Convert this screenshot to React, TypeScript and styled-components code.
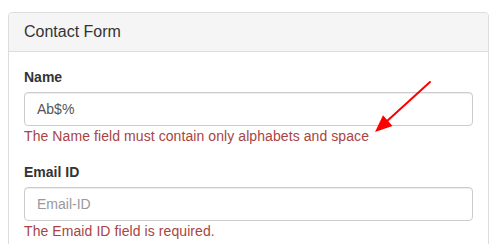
import React from "react";
import styled, { createGlobalStyle } from "styled-components";

const Global = createGlobalStyle`
  html, body { margin: 0; padding: 0; background: #fff; }
  body {
    font-family: "Liberation Sans", Arial, Helvetica, sans-serif;
    font-size: 14px;
    line-height: 20px;
    color: #333;
  }
  * { box-sizing: border-box; }
`;

const Page = styled.div`
  position: relative;
  padding: 12px 8px 0 8px;
  width: 497px;
  height: 244px;
  overflow: hidden;
`;

const Panel = styled.div`
  background: #fff;
  border: 1px solid #ddd;
  border-radius: 4px;
  box-shadow: 0 1px 1px rgba(0, 0, 0, 0.05);
`;

const PanelHeading = styled.div`
  background: #f5f5f5;
  border-bottom: 1px solid #ddd;
  border-top-left-radius: 3px;
  border-top-right-radius: 3px;
  padding: 10px 15px;
`;

const PanelTitle = styled.h3`
  margin: 0;
  font-size: 16px;
  line-height: 1.1;
  font-weight: 400;
  color: #333;
`;

const PanelBody = styled.div`
  padding: 15px;
`;

const FormGroup = styled.div`
  display: flex;
  flex-direction: column;
  margin-bottom: 16px;
`;

const Label = styled.label`
  font-weight: 700;
  font-size: 14px;
  line-height: 20px;
  margin-bottom: 5px;
  color: #333;
`;

const Input = styled.input`
  display: block;
  width: 100%;
  height: 34px;
  padding: 6px 12px;
  font-family: inherit;
  font-size: 14px;
  line-height: 20px;
  color: #555;
  background: #fff;
  border: 1px solid #ccc;
  border-radius: 4px;
  box-shadow: inset 0 1px 1px rgba(0, 0, 0, 0.075);
  outline: none;
  &::placeholder { color: #999; opacity: 1; }
`;

const HelpBlock = styled.span`
  display: block;
  margin-top: 0;
  font-size: 14px;
  line-height: 20px;
  letter-spacing: 0.08px;
  color: #a94442;
`;

const Arrow = styled.svg`
  position: absolute;
  left: 0;
  top: 0;
  pointer-events: none;
`;

export default function App() {
  return (
    <>
      <Global />
      <Page>
        <Panel>
          <PanelHeading>
            <PanelTitle>Contact Form</PanelTitle>
          </PanelHeading>
          <PanelBody>
            <FormGroup>
              <Label>Name</Label>
              <Input defaultValue="Ab$%" />
              <HelpBlock>The Name field must contain only alphabets and space</HelpBlock>
            </FormGroup>
            <FormGroup>
              <Label>Email ID</Label>
              <Input placeholder="Email-ID" />
              <HelpBlock>The Emaid ID field is required.</HelpBlock>
            </FormGroup>
          </PanelBody>
        </Panel>
        <Arrow width="497" height="244" viewBox="0 0 497 244">
          <line x1="430" y1="82" x2="386" y2="122" stroke="#ff0000" strokeWidth="2" strokeLinecap="round" />
          <polygon points="375,132 392.5,126 383,115.2" fill="#ff0000" />
        </Arrow>
      </Page>
    </>
  );
}
